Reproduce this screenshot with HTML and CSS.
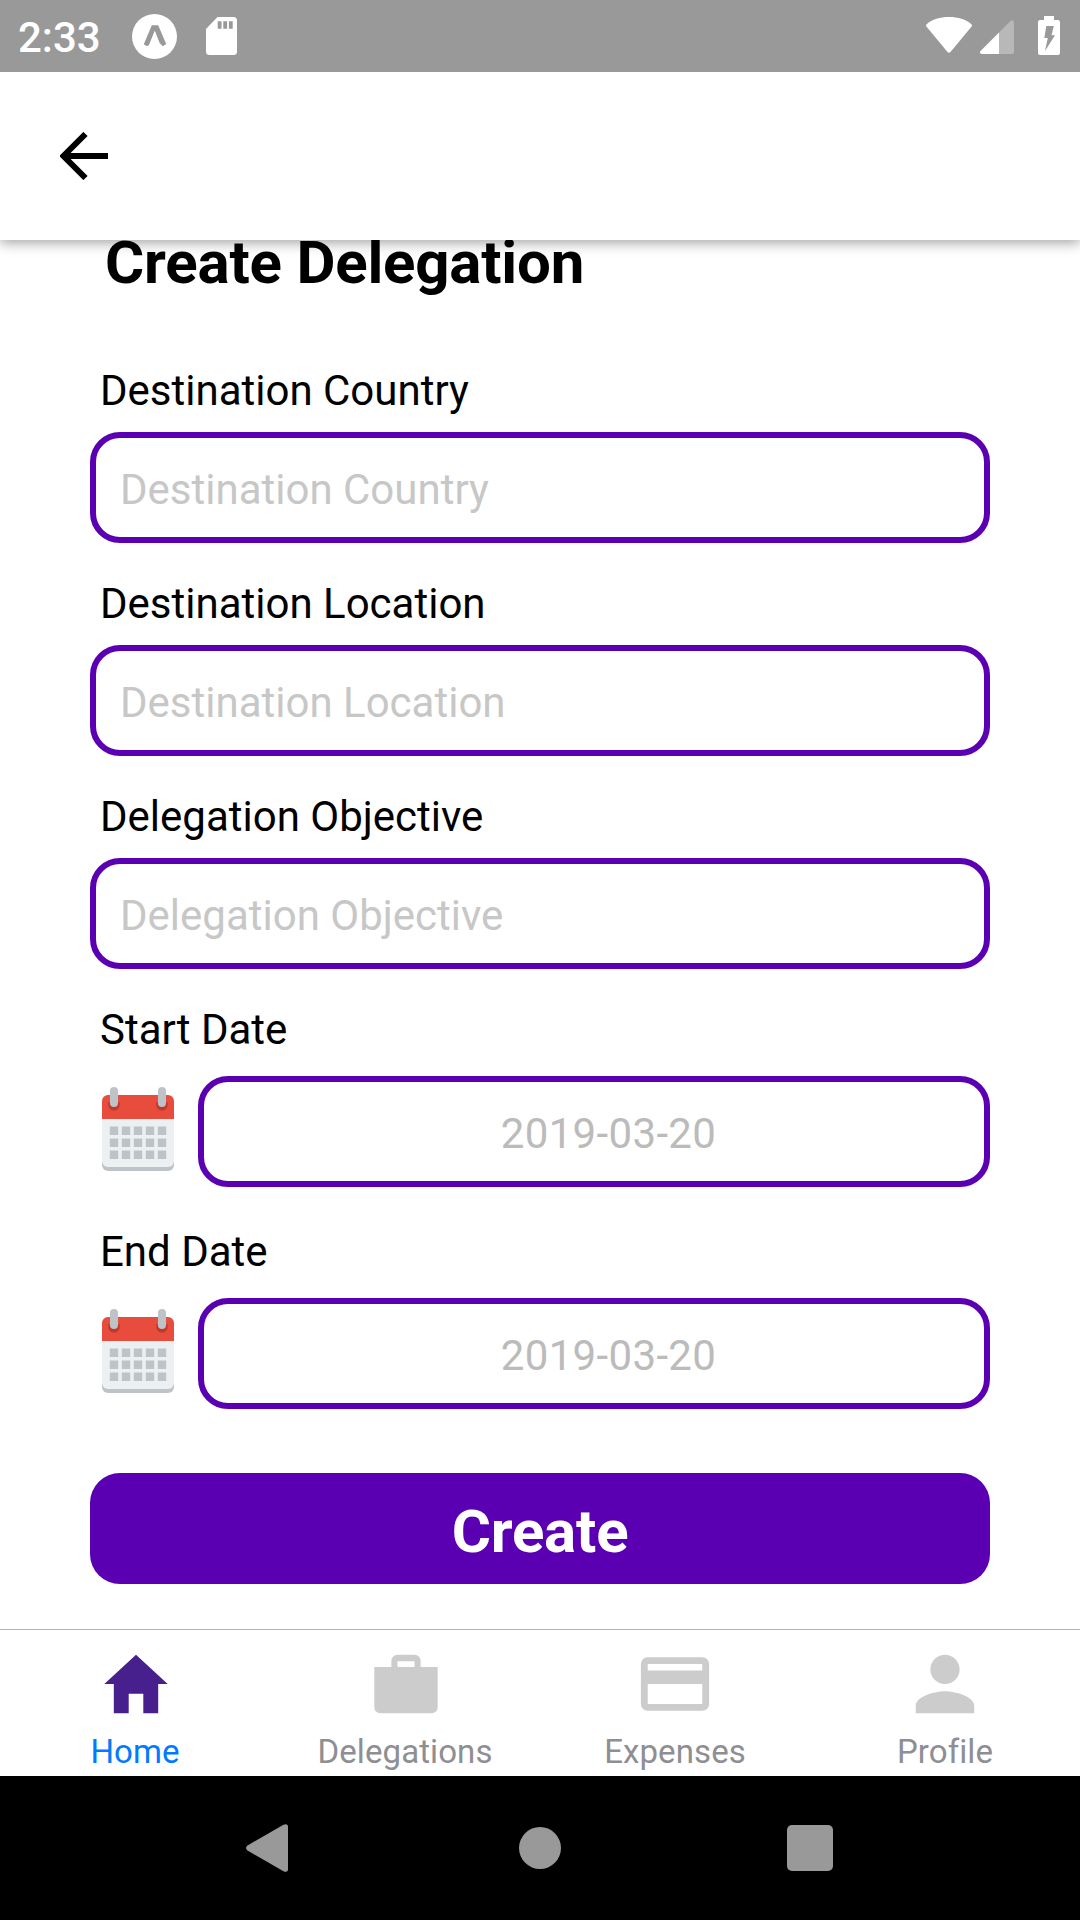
FILE: index.html
```html
<!DOCTYPE html>
<html lang="en">
<head>
<meta charset="utf-8">
<title>Create Delegation</title>
<link rel="stylesheet" href="styles.css">
</head>
<body>
<svg class="symbols" aria-hidden="true">
  <symbol id="calendar" viewBox="0 0 24 28">
    <path fill="#bdc3c7" d="M0 24h24v2a2 2 0 0 1-2 2H2a2 2 0 0 1-2-2z"/>
    <path fill="#ecf0f1" d="M0 9h24v15.7a2 2 0 0 1-2 2H2a2 2 0 0 1-2-2z"/>
    <path fill="#e74c3c" d="M2 2.7h20a2 2 0 0 1 2 2v6H0v-6a2 2 0 0 1 2-2z"/>
    <path fill="#c0392b" d="M2.1 5.1h3.8v.9a1.9 1.9 0 0 1-3.8 0zM18.1 5.1h3.8v.9a1.9 1.9 0 0 1-3.8 0z"/>
    <rect x="2.65" y="0" width="2.7" height="6.7" rx="1.35" fill="#bdc3c7"/>
    <rect x="18.65" y="0" width="2.7" height="6.7" rx="1.35" fill="#bdc3c7"/>
    <path fill="#bdc3c7" d="M2.6 13.2h2.8V16H2.6zM6.6 13.2h2.8V16H6.6zM10.6 13.2h2.8V16h-2.8zM14.6 13.2h2.8V16h-2.8zM18.6 13.2h2.8V16h-2.8zM2.6 17.2h2.8V20H2.6zM6.6 17.2h2.8V20H6.6zM10.6 17.2h2.8V20h-2.8zM14.6 17.2h2.8V20h-2.8zM18.6 17.2h2.8V20h-2.8zM2.6 21.2h2.8V24H2.6zM6.6 21.2h2.8V24H6.6zM10.6 21.2h2.8V24h-2.8zM14.6 21.2h2.8V24h-2.8zM18.6 21.2h2.8V24h-2.8z"/>
  </symbol>
</svg>
<div class="screen">
  <div class="status-bar">
    <span class="clock">2:33</span>
    <svg class="expo" viewBox="0 0 45 45"><circle cx="22.5" cy="22.5" r="22.5" fill="#fff"/><path d="M19.8 11.2h6.4L34.2 30l-3.400 2.200L27.600 29 22.800 17 17.200 30.800 15 32.200 11.800 30.200z" fill="#999"/><path d="M22.800 17 28 31.500l-3 1H20l-3-1z" fill="#fff"/></svg>
    <svg class="sd-card" viewBox="0 0 31 38"><path fill="#fff" fill-rule="evenodd" d="M11.5 0H27.5a3.5 3.5 0 0 1 3.5 3.5v31a3.5 3.5 0 0 1-3.5 3.5h-24A3.5 3.5 0 0 1 0 34.5V12zM11.7 4.2v7.5h3.8V4.2zM17.3 4.2v7.5h3.8V4.2zM22.9 4.2v7.5h3.8V4.2z"/></svg>
    <svg class="wifi" viewBox="0 0 46 36"><path fill="#fff" d="M.6 7.2C6 2.4 14 0 23 0s17 2.400 22.400 7.200q1 1 .2 2.200L24.700 34.800q-1.700 2-3.400 0L.4 9.400Q-.4 8.200.6 7.200z"/></svg>
    <svg class="signal" viewBox="0 0 34 34"><path fill="#b8b8b8" d="M19 12.500 30.500 1Q33.300-.8 34 2.500V32q0 2-2 2H19z"/><path fill="#fff" d="M19 12.500V34H2Q-1 33.500.5 31z"/></svg>
    <svg class="battery" viewBox="0 0 22 39"><path fill="#fff" d="M6 0h10v4h4a2 2 0 0 1 2 2v31a2 2 0 0 1-2 2H2a2 2 0 0 1-2-2V6a2 2 0 0 1 2-2h4z"/><path fill="#999" d="M8.300 10h7.500l-2.300 9.300H17L7 35l2.800-13H6.300z"/></svg>
  </div>
  <header class="app-header">
    <svg class="back" viewBox="0 0 48 48"><path d="M48 24H5M25.500 2 3.500 24l22 22" fill="none" stroke="#000" stroke-width="6"/></svg>
  </header>
  <main class="form">
    <h1 class="title">Create Delegation</h1>
    <div class="field">
      <div class="label">Destination Country</div>
      <div class="input">Destination Country</div>
    </div>
    <div class="field">
      <div class="label">Destination Location</div>
      <div class="input">Destination Location</div>
    </div>
    <div class="field">
      <div class="label">Delegation Objective</div>
      <div class="input">Delegation Objective</div>
    </div>
    <div class="field date-field">
      <div class="label">Start Date</div>
      <div class="date-row">
        <svg class="calendar"><use href="#calendar"/></svg>
        <div class="input date">2019-03-20</div>
      </div>
    </div>
    <div class="field date-field">
      <div class="label">End Date</div>
      <div class="date-row">
        <svg class="calendar"><use href="#calendar"/></svg>
        <div class="input date">2019-03-20</div>
      </div>
    </div>
    <div class="submit">Create</div>
  </main>
  <nav class="tabs">
    <div class="tab active">
      <svg class="tab-icon" viewBox="0 0 512 512"><path d="M208 448V320h96v128h97.600V256H464L256 64 48 256h62.400v192z"/></svg>
      <span>Home</span>
    </div>
    <div class="tab">
      <svg class="tab-icon" viewBox="0 0 512 512"><path fill-rule="evenodd" d="M48 144h112v-40a40 40 0 0 1 40-40h112a40 40 0 0 1 40 40v40h112v264a40 40 0 0 1-40 40H88a40 40 0 0 1-40-40zM200 106v38h112v-38z"/></svg>
      <span>Delegations</span>
    </div>
    <div class="tab">
      <svg class="tab-icon" viewBox="0 0 512 512"><path fill-rule="evenodd" d="M76 80h360a44 44 0 0 1 44 44v264a44 44 0 0 1-44 44H76a44 44 0 0 1-44-44V124a44 44 0 0 1 44-44zM77 124v44h358v-44zM77 256v132h358V256z"/></svg>
      <span>Expenses</span>
    </div>
    <div class="tab">
      <svg class="tab-icon" viewBox="0 0 512 512"><path d="M256 256c52.805 0 96-43.201 96-96s-43.195-96-96-96-96 43.201-96 96 43.195 96 96 96zm0 48c-63.598 0-192 32.402-192 96v48h384v-48c0-63.598-128.402-96-192-96z"/></svg>
      <span>Profile</span>
    </div>
  </nav>
  <div class="system-nav">
    <svg class="nav-back" viewBox="0 0 42 48"><path fill="#999" d="M1.500 21.500 37.500.8Q42-1 42 3v42q0 4-4.500 2.200L1.500 26.500q-3-2.500 0-5z"/></svg>
    <div class="nav-home"></div>
    <div class="nav-recent"></div>
  </div>
</div>
</body>
</html>
```
FILE: styles.css
```css
* { box-sizing: border-box; }

body {
  margin: 0;
  background: #fff;
  color: #000;
  font-family: Roboto, sans-serif;
}

svg { display: block; flex: none; }

.symbols {
  position: absolute;
  width: 0;
  height: 0;
}

.screen {
  width: 1080px;
  height: 1920px;
  display: flex;
  flex-direction: column;
  overflow: hidden;
}

.status-bar {
  height: 72px;
  flex: none;
  display: flex;
  align-items: flex-start;
  padding-left: 18px;
  background: #999;
  color: #fff;
}

.clock {
  width: 114px;
  padding-top: 13px;
  font-size: 42px;
  line-height: 49px;
  font-weight: 500;
}

.expo { width: 45px; height: 45px; margin-top: 14px; }
.sd-card { width: 31px; height: 38px; margin: 17px 0 0 29px; }
.wifi { width: 46px; height: 36px; margin: 17px 8px 0 auto; }
.signal { width: 34px; height: 34px; margin: 20px 24px 0 0; }
.battery { width: 22px; height: 39px; margin: 16px 20px 0 0; }

.app-header {
  position: relative;
  z-index: 1;
  height: 168px;
  flex: none;
  display: flex;
  align-items: center;
  padding-left: 60px;
  background: #fff;
  box-shadow: 0 3px 12px rgba(0, 0, 0, 0.36);
  clip-path: inset(0 0 -24px 0);
}

.back { width: 48px; height: 48px; }

.form {
  height: 1389px;
  flex: none;
  padding: 0 90px;
}

.title {
  margin: -13px 0 68px 15px;
  font-size: 60px;
  line-height: 71px;
  font-weight: 700;
  letter-spacing: -0.2px;
}

.field { margin-bottom: 36px; }

.label {
  margin: 0 0 17px 10px;
  font-size: 42px;
  line-height: 49px;
}

.input {
  height: 111px;
  padding: 27px 24px 0;
  border: 6px solid #5a00b2;
  border-radius: 30px;
  color: #c7c7c7;
  font-size: 42px;
  line-height: 49px;
}

.date-field { margin-bottom: 40px; }
.date-field .label { margin-bottom: 22px; }

.date-row { display: flex; }

.calendar {
  width: 72px;
  height: 84px;
  margin: 11px 24px 0 12px;
}

.date {
  flex: 1;
  padding-left: 53px;
  color: #bbb;
  text-align: center;
  letter-spacing: 0.35px;
}

.submit {
  height: 111px;
  margin-top: 64px;
  padding-top: 23px;
  border-radius: 30px;
  background: #5a00b2;
  color: #fff;
  font-size: 60px;
  line-height: 71px;
  font-weight: 700;
  text-align: center;
  letter-spacing: -0.2px;
}

.tabs {
  height: 147px;
  flex: none;
  display: flex;
  border-top: 1px solid #b2b2b2;
  background: #fff;
}

.tab {
  flex: 1;
  display: flex;
  flex-direction: column;
  align-items: center;
  padding-top: 15px;
  color: #8e8e93;
  font-size: 33px;
  line-height: 39px;
  letter-spacing: 0.1px;
}

.tab.active { color: #007aff; }

.tab-icon {
  width: 78px;
  height: 78px;
  margin: 0 0 9px 1px;
  fill: #ccc;
}

.tab:nth-child(n + 3) .tab-icon { margin-left: 0; }

.active .tab-icon { fill: #48208e; }

.system-nav {
  height: 144px;
  flex: none;
  display: flex;
  align-items: center;
  padding-left: 246px;
  background: #000;
}

.nav-back { width: 42px; height: 48px; margin-right: 231px; }

.nav-home {
  width: 42px;
  height: 42px;
  margin-right: 226px;
  border-radius: 50%;
  background: #999;
}

.nav-recent {
  width: 46px;
  height: 46px;
  border-radius: 5px;
  background: #999;
}
```
